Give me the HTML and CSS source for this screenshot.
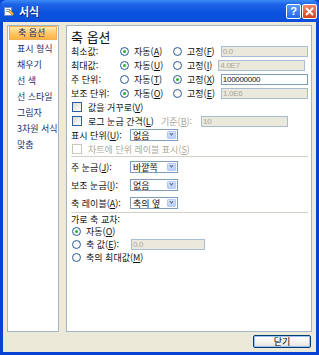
FILE: index.html
```html
<!DOCTYPE html>
<html lang="ko">
  <head>
    <meta charset="UTF-8" />
    <title>서식</title>
    <link rel="stylesheet" href="styles.css">
  </head>
  <body>
    <div class="window">
      <div class="titlebar">
        <span class="app-icon">
          <svg width="11" height="11" viewBox="0 0 11 11">
            <rect x="0.5" y="1.5" width="7" height="8" fill="#fff" stroke="#6d8fc9" />
            <rect x="2" y="3" width="4" height="1" fill="#7a9ad0" />
            <rect x="2" y="5" width="4" height="1" fill="#7a9ad0" />
            <path d="M6 4 L10 8 L8.5 9.5 L4.5 5.5 Z" fill="#f4c24a" stroke="#9a6a12" stroke-width="0.6" />
          </svg>
        </span>
        <span class="title">서식</span>
        <span class="caption-btns">
          <span class="cap-btn help">?</span>
          <span class="cap-btn close">
            <svg width="9" height="9" viewBox="0 0 9 9">
              <path d="M1.5 1.5 L7.5 7.5 M7.5 1.5 L1.5 7.5" stroke="#fff" stroke-width="1.8" stroke-linecap="round" />
            </svg>
          </span>
        </span>
      </div>

      <div class="client">
        <div class="panels">
          <ul class="nav">
            <li class="active">축 옵션</li>
            <li>표시 형식</li>
            <li>채우기</li>
            <li>선 색</li>
            <li>선 스타일</li>
            <li>그림자</li>
            <li>3차원 서식</li>
            <li>맞춤</li>
          </ul>

          <div class="page">
            <div class="heading">축 옵션</div>

            <div class="row">
              <span class="lbl">최소값:</span>
              <span class="radio on"></span><span class="opt">자동(<u>A</u>)</span>
              <span class="radio"></span><span class="opt2">고정(<u>F</u>)</span>
              <span class="field off">0.0</span>
            </div>
            <div class="row">
              <span class="lbl">최대값:</span>
              <span class="radio on"></span><span class="opt">자동(<u>U</u>)</span>
              <span class="radio"></span><span class="opt2">고정(<u>I</u>)</span>
              <span class="field off">4.0E7</span>
            </div>
            <div class="row">
              <span class="lbl">주 단위:</span>
              <span class="radio"></span><span class="opt">자동(<u>T</u>)</span>
              <span class="radio on"></span><span class="opt2">고정(<u>X</u>)</span>
              <span class="field">100000000</span>
            </div>
            <div class="row">
              <span class="lbl">보조 단위:</span>
              <span class="radio on"></span><span class="opt">자동(<u>O</u>)</span>
              <span class="radio"></span><span class="opt2">고정(<u>E</u>)</span>
              <span class="field off">1.0E6</span>
            </div>

            <div class="row">
              <span class="check"></span><span>값을 거꾸로(<u>V</u>)</span>
            </div>
            <div class="row">
              <span class="check"></span><span class="log-lbl">로그 눈금 간격(<u>L</u>)</span>
              <span class="dim base-lbl">기준(<u>B</u>):</span>
              <span class="field off">10</span>
            </div>
            <div class="row">
              <span class="lbl wide">표시 단위(<u>U</u>):</span>
              <span class="combo"><span class="combo-text">없음</span><span class="combo-btn"></span></span>
            </div>
            <div class="row dim">
              <span class="check off"></span><span>차트에 단위 레이블 표시(<u>S</u>)</span>
            </div>

            <hr class="sep" />

            <div class="row tick">
              <span class="lbl wide">주 눈금(<u>J</u>):</span>
              <span class="combo"><span class="combo-text">바깥쪽</span><span class="combo-btn"></span></span>
            </div>
            <div class="row tick">
              <span class="lbl wide">보조 눈금(<u>I</u>):</span>
              <span class="combo"><span class="combo-text">없음</span><span class="combo-btn"></span></span>
            </div>
            <div class="row tick">
              <span class="lbl wide">축 레이블(<u>A</u>):</span>
              <span class="combo"><span class="combo-text">축의 옆</span><span class="combo-btn"></span></span>
            </div>

            <hr class="sep" />

            <div class="group-title">가로 축 교차:</div>
            <div class="row cross">
              <span class="radio on"></span><span>자동(<u>O</u>)</span>
            </div>
            <div class="row cross">
              <span class="radio"></span><span class="cross-lbl">축 값(<u>E</u>):</span>
              <span class="field off short">0.0</span>
            </div>
            <div class="row cross">
              <span class="radio"></span><span>축의 최대값(<u>M</u>)</span>
            </div>
          </div>
        </div>

        <div class="footer">
          <button class="btn">닫기</button>
        </div>
      </div>
    </div>
  </body>
</html>
```

FILE: styles.css
```css
body {
  margin: 0;
  padding: 0;
  font-family: "Noto Sans CJK KR", "Liberation Sans", sans-serif;
  font-size: 9px;
  color: #111;
  background-color: #ece9d8;
}
u {
  text-decoration: underline;
}
.window {
  width: 319px;
  height: 355px;
  display: flex;
  flex-direction: column;
  background-color: #0842d4;
  box-sizing: border-box;
}
.titlebar {
  height: 22px;
  display: flex;
  align-items: center;
  padding: 0 2px 0 4px;
  background: linear-gradient(#3b8cf6 0%, #1e63e6 20%, #0a53e0 60%, #0a4fd6 100%);
  border-radius: 6px 6px 0 0;
  flex-shrink: 0;
}
.app-icon {
  width: 11px;
  height: 11px;
  display: flex;
}
.title {
  margin-left: 4px;
  color: #fff;
  font-weight: bold;
  font-size: 11px;
  text-shadow: 1px 1px 0 #0a1f70;
}
.caption-btns {
  margin-left: auto;
  display: flex;
  gap: 1px;
}
.cap-btn {
  width: 13px;
  height: 13px;
  border: 1px solid #fff;
  border-radius: 2px;
  display: flex;
  align-items: center;
  justify-content: center;
  color: #fff;
  font-family: "Liberation Sans", sans-serif;
  font-weight: bold;
  font-size: 11px;
}
.help {
  background: linear-gradient(#5a9bff, #2468ee);
}
.close {
  background: linear-gradient(#ee8a6c, #d9431c);
}
.client {
  flex: 1;
  margin: 0 3px 3px;
  padding: 3px 4px 4px;
  background-color: #ece9d8;
  display: flex;
  flex-direction: column;
}
.panels {
  flex: 1;
  display: flex;
  gap: 7px;
}
.nav {
  width: 53px;
  margin: 0;
  padding: 0;
  list-style: none;
  background-color: #fff;
  border: 1px solid #a5b4c8;
}
.nav li {
  height: 16px;
  line-height: 16px;
  padding-left: 9px;
  color: #1b2f6e;
  white-space: nowrap;
}
.nav li.active {
  margin: 0 1px 1px;
  padding-left: 8px;
  height: 12px;
  line-height: 12px;
  background: linear-gradient(#ffe9b0, #ffc666 55%, #ffb346);
  border: 1px solid #f0b050;
}
.page {
  flex: 1;
  background-color: #fff;
  border: 1px solid #a5b4c8;
  padding: 4px 3px 0 4px;
}
.heading {
  font-size: 13px;
  line-height: 14px;
  color: #111;
}
.row {
  display: flex;
  align-items: center;
  height: 14px;
  white-space: nowrap;
}
.lbl {
  width: 48px;
}
.lbl.wide {
  width: 59px;
}
.radio {
  width: 7px;
  height: 7px;
  border: 1px solid #2c5fa0;
  border-radius: 50%;
  background: radial-gradient(#fff 40%, #dcdcd2);
  margin: 0 5px 0 1px;
  position: relative;
  flex-shrink: 0;
}
.radio.on::after {
  content: "";
  position: absolute;
  left: 2px;
  top: 2px;
  width: 3px;
  height: 3px;
  border-radius: 50%;
  background-color: #2fae2f;
}
.opt {
  width: 38px;
}
.opt2 {
  margin-right: 6px;
}
.field {
  width: 83px;
  height: 9px;
  line-height: 9px;
  border: 1px solid #7f9db9;
  background-color: #fff;
  padding: 0 1px;
  font-family: "Liberation Sans", sans-serif;
  font-size: 8px;
  letter-spacing: -0.3px;
}
.field.off {
  background-color: #ebe9dc;
  border-color: #a9bcd6;
  color: #aca899;
}
.field.short {
  width: 70px;
}
.check {
  width: 8px;
  height: 8px;
  border: 1px solid #2c5fa0;
  background: linear-gradient(135deg, #dcdcd2, #fff);
  margin: 0 6px 0 1px;
  flex-shrink: 0;
}
.check.off {
  border-color: #c9c7ba;
  background: #fff;
}
.dim {
  color: #aca899;
}
.log-lbl {
  width: 73px;
}
.base-lbl {
  width: 40px;
}
.combo {
  display: flex;
  align-items: center;
  width: 43px;
  height: 10px;
  border: 1px solid #7f9db9;
  background-color: #fff;
  padding: 0 1px 0 2px;
}
.combo-text {
  flex: 1;
  font-size: 9px;
}
.combo-btn {
  width: 9px;
  height: 8px;
  border-radius: 1px;
  background: linear-gradient(#dbe6fd, #b9cdf8);
  border: 1px solid #b7c9f3;
  position: relative;
  box-sizing: border-box;
}
.combo-btn::after {
  content: "";
  position: absolute;
  left: 2px;
  top: 0;
  width: 2px;
  height: 2px;
  border-right: 1.5px solid #4d6185;
  border-bottom: 1.5px solid #4d6185;
  transform: rotate(45deg);
}
.sep {
  margin: 0 0 1px;
  border: none;
  border-top: 1px solid #d4d0c8;
}
.row.tick {
  height: 18px;
}
.group-title {
  line-height: 11px;
}
.row.cross {
  height: 13px;
}
.cross-lbl {
  width: 45px;
}
.footer {
  display: flex;
  justify-content: flex-end;
  padding: 3px 1px 0 0;
}
.btn {
  width: 58px;
  height: 13px;
  padding: 0;
  font-family: "Noto Sans CJK KR", "Liberation Sans", sans-serif;
  font-size: 9px;
  line-height: 11px;
  color: #000;
  background: linear-gradient(#fff, #ecebe6 80%, #d6d0c5);
  border: 1px solid #003c74;
  border-radius: 2px;
  box-shadow: inset 0 0 0 1px #9fc1f3;
}
```
